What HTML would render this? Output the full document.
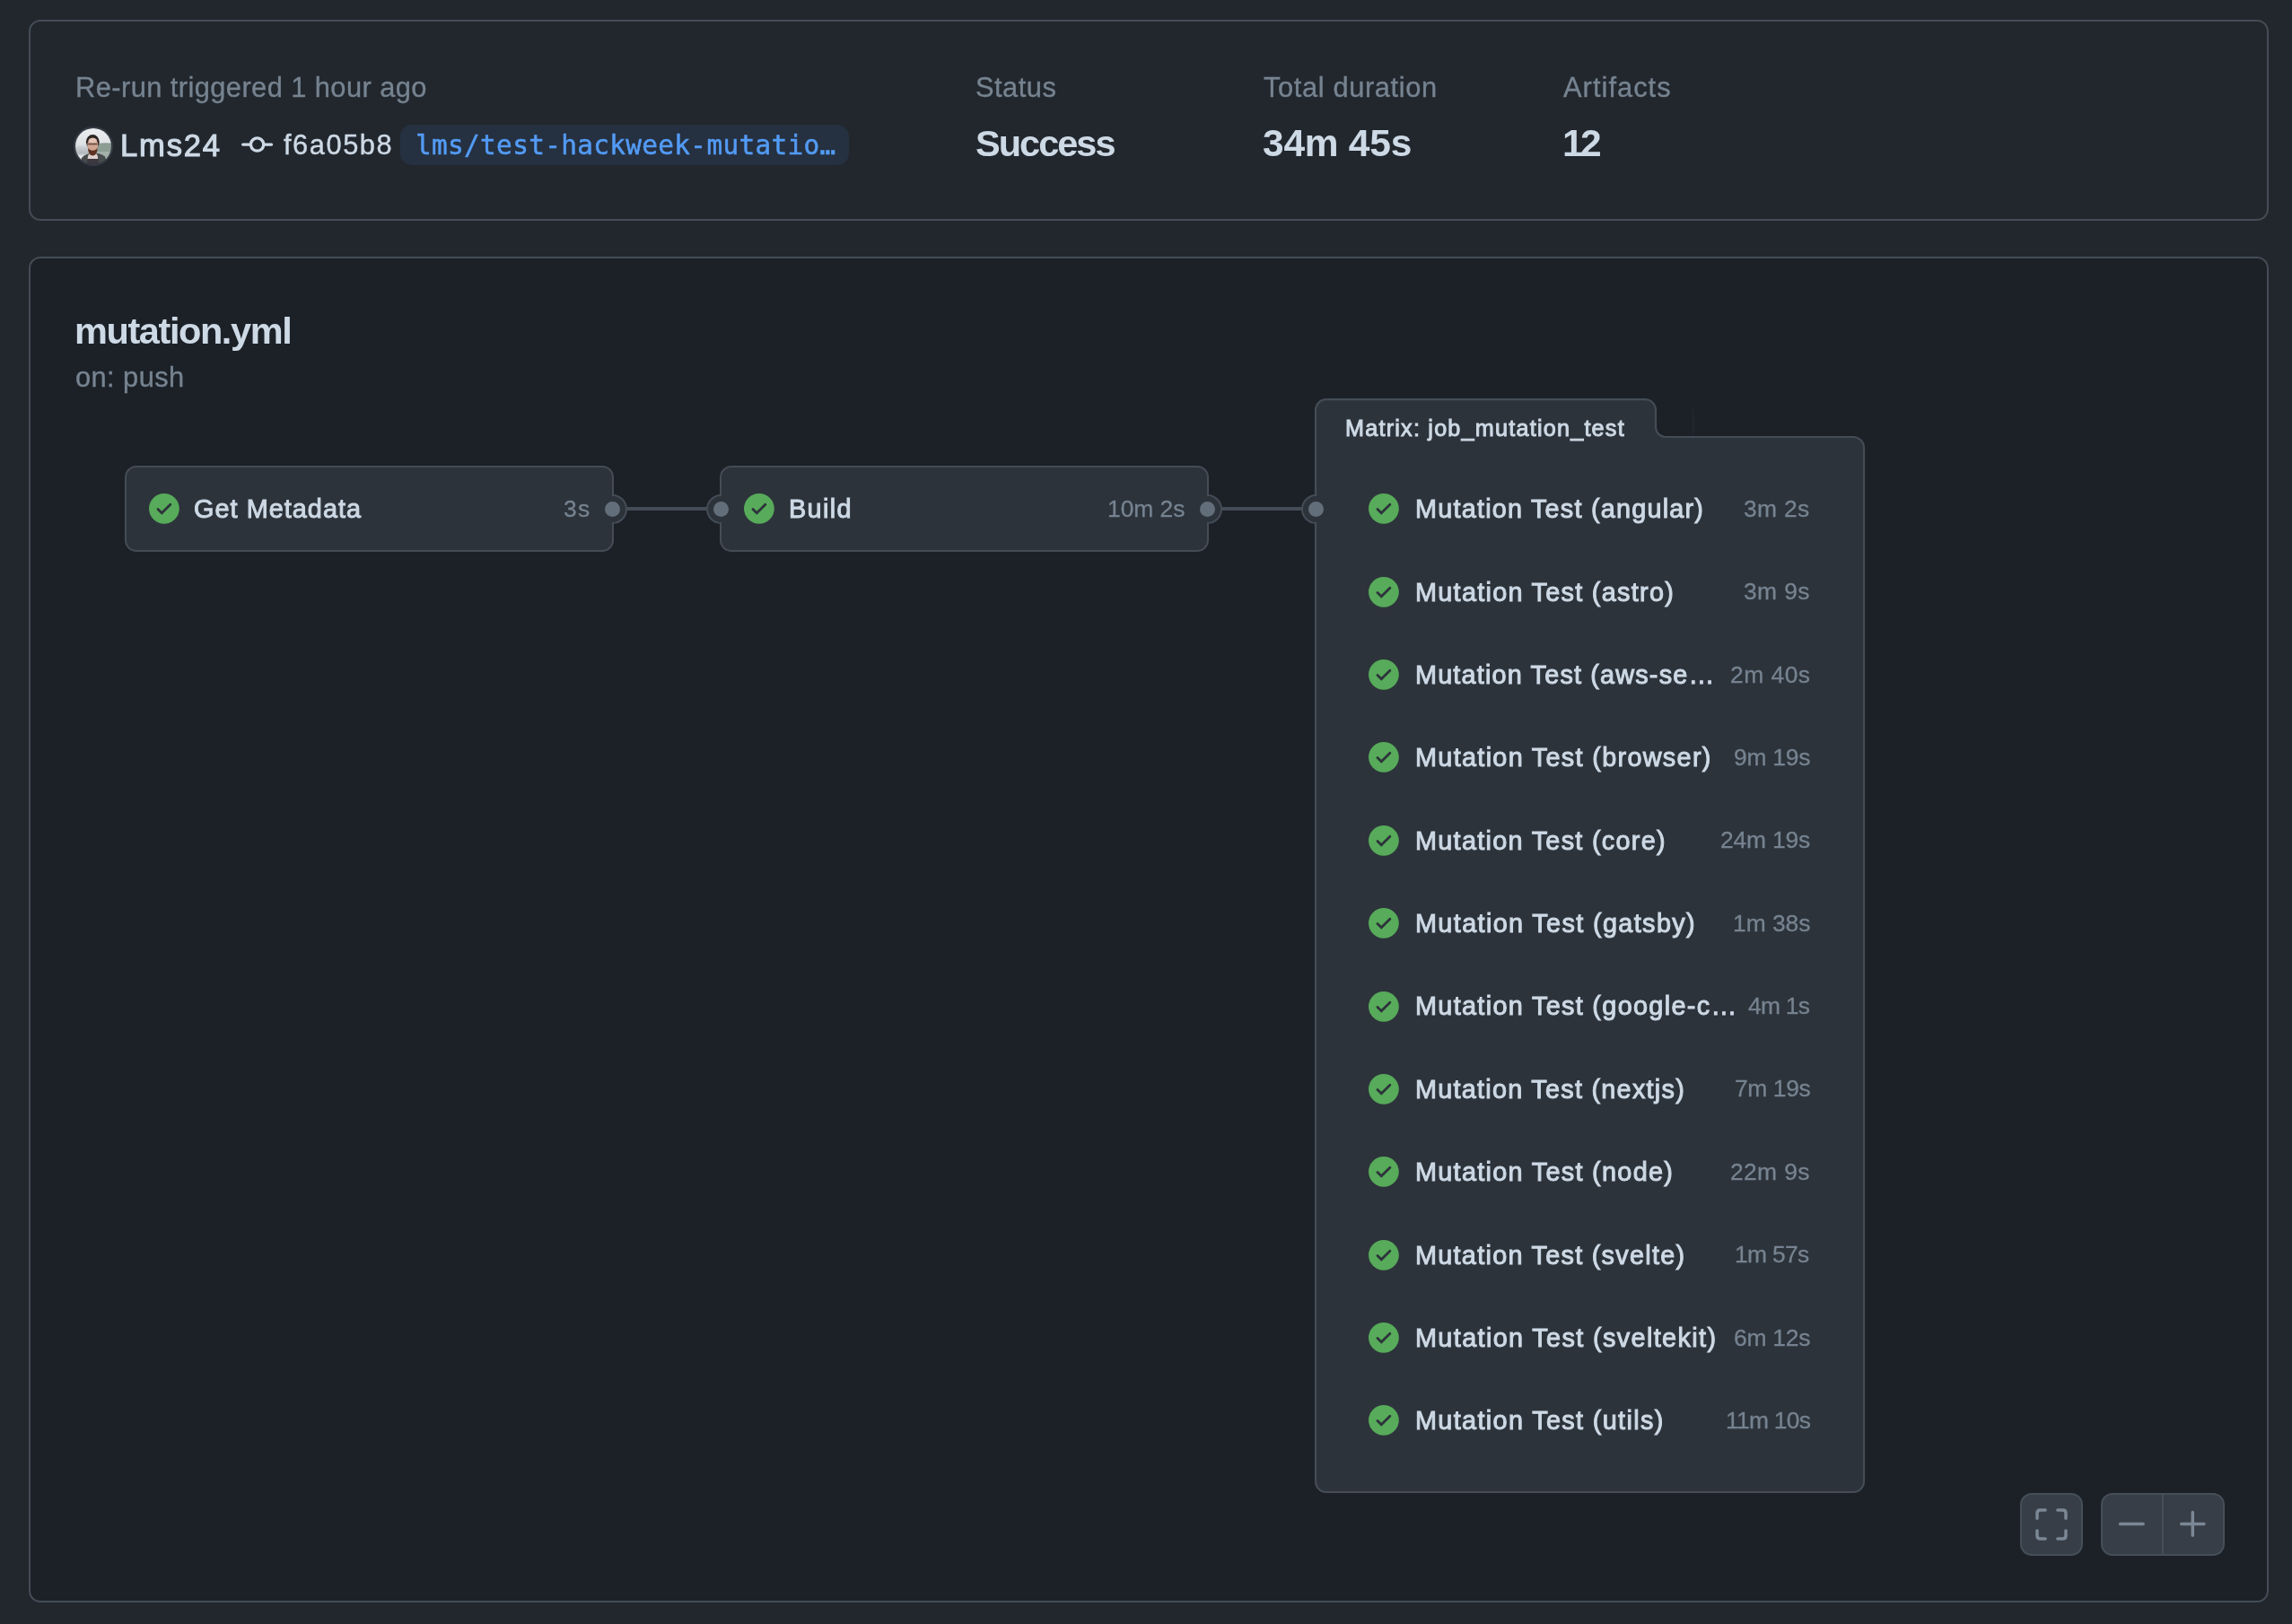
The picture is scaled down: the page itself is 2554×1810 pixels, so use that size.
<!DOCTYPE html>
<html lang="en"><head><meta charset="utf-8"><title>mutation.yml · workflow run</title>
<style>
html,body{margin:0;padding:0;background:#22272e;}
body{width:2554px;height:1810px;position:relative;overflow:hidden;font-family:'Liberation Sans', sans-serif;}
.t{position:absolute;white-space:nowrap;display:block;will-change:transform;}
.card{position:absolute;box-sizing:border-box;border:2px solid #444c56;border-radius:13px;}
.job{position:absolute;box-sizing:border-box;border:2px solid #444c56;border-radius:13px;background:#2d333b;}
.ck{position:absolute;display:block;}
.halo{position:absolute;box-sizing:border-box;width:33px;height:33px;border-radius:50%;border:2px solid #444c56;background:#2d333b;}
.dot{position:absolute;width:17px;height:17px;border-radius:50%;background:#636e7b;}
.line{position:absolute;height:4.4px;background:#444c56;}
.btn{position:absolute;box-sizing:border-box;background:#373e47;border:2px solid #464e57;border-radius:13px;}
svg{overflow:visible}

</style></head><body>
<div class="card" style="left:32px;top:22px;width:2496px;height:224px;"></div>
<span id="t1" class="t" style="left:84.00px;top:82.93px;font:400 30.8px/1 'Liberation Sans', sans-serif;color:#768390;letter-spacing:0.438px;-webkit-text-stroke:0.35px #768390;">Re-run triggered 1 hour ago</span>
<svg class="ck" style="left:82px;top:141px" width="44" height="44" viewBox="-2 -2 44 44">
<defs><clipPath id="av"><circle cx="20" cy="20" r="20"/></clipPath>
<filter id="bl" x="-10%" y="-10%" width="120%" height="120%"><feGaussianBlur stdDeviation="0.75"/></filter>
<linearGradient id="sky" x1="0" y1="0" x2="0" y2="1"><stop offset="0" stop-color="#eef0f3"/><stop offset=".45" stop-color="#dfe2e5"/><stop offset=".55" stop-color="#c3c9cd"/><stop offset=".66" stop-color="#b3babf"/><stop offset=".74" stop-color="#e2e5e8"/><stop offset="1" stop-color="#e9ebee"/></linearGradient></defs>
<circle cx="20" cy="20" r="21" fill="none" stroke="#353c45" stroke-width="2"/>
<g clip-path="url(#av)"><g filter="url(#bl)">
<rect x="-4" y="-4" width="48" height="48" fill="url(#sky)"/>
<path d="M24 17.5 Q32 15.5 44 17 V33 H24Z" fill="#8c9d94"/>
<path d="M24 26 H44 V33 H24Z" fill="#a3b0aa"/>
<path d="M3 44 L7 33 Q12 27.5 20 27.5 Q28 27.5 33 31.5 L38 44Z" fill="#474c4c"/>
<path d="M13.8 35 Q13.2 27 19.5 27 Q25.6 27 25 35 Z" fill="#ddd1cc"/>
<path d="M12.5 44 L13.5 34 H25.2 L27 44Z" fill="#3a3840"/>
<ellipse cx="19.3" cy="15.2" rx="7.4" ry="8.2" fill="#2b2421"/>
<ellipse cx="19.3" cy="18.6" rx="5.9" ry="8" fill="#cfa592"/>
<ellipse cx="19.3" cy="13.6" rx="4.6" ry="2.6" fill="#e3c4b6"/>
<path d="M14 22 Q14.4 30.6 19.3 30.6 Q24.2 30.6 24.6 22 Q22 25.2 19.3 24.8 Q16.6 25.2 14 22Z" fill="#5c3323"/>
<rect x="14.2" y="16.7" width="10.2" height="1.7" fill="#6a4d42"/>
</g></g></svg>
<span id="t2" class="t" style="left:134.10px;top:144.71px;font:400 34.6px/1 'Liberation Sans', sans-serif;color:#cdd9e5;letter-spacing:1.805px;-webkit-text-stroke:1.1px #cdd9e5;">Lms24</span>
<svg class="ck" style="left:269px;top:143.9px" width="35.2" height="35.2" viewBox="0 0 16 16"><path fill="#cdd9e5" d="M11.93 8.5a4.002 4.002 0 0 1-7.86 0H.75a.75.75 0 0 1 0-1.5h3.32a4.002 4.002 0 0 1 7.86 0h3.32a.75.75 0 0 1 0 1.5Zm-1.43-.75a2.5 2.5 0 1 0-5 0 2.5 2.5 0 0 0 5 0Z"/></svg>
<span id="t3" class="t" style="left:315.60px;top:146.93px;font:400 30.8px/1 'Liberation Sans', sans-serif;color:#cdd9e5;letter-spacing:1.552px;-webkit-text-stroke:0.4px #cdd9e5;">f6a05b8</span>
<div style="position:absolute;left:445.5px;top:138.6px;width:500.5px;height:45.4px;border-radius:13px;background:#253040;"></div>
<span id="t4" class="t" style="left:462.70px;top:148.33px;font:400 29.4px/1 'DejaVu Sans Mono', 'Liberation Mono', monospace;color:#539bf5;letter-spacing:0.327px;-webkit-text-stroke:0.5px #539bf5;">lms/test-hackweek-mutatio…</span>
<span id="t5" class="t" style="left:1086.70px;top:82.83px;font:400 30.8px/1 'Liberation Sans', sans-serif;color:#768390;letter-spacing:0.494px;-webkit-text-stroke:0.35px #768390;">Status</span>
<span id="t6" class="t" style="left:1086.70px;top:139.07px;font:700 41.5px/1 'Liberation Sans', sans-serif;color:#cdd9e5;letter-spacing:-1.995px;">Success</span>
<span id="t7" class="t" style="left:1407.70px;top:82.83px;font:400 30.8px/1 'Liberation Sans', sans-serif;color:#768390;letter-spacing:0.628px;-webkit-text-stroke:0.35px #768390;">Total duration</span>
<span id="t8" class="t" style="left:1406.70px;top:139.22px;font:700 42.5px/1 'Liberation Sans', sans-serif;color:#cdd9e5;letter-spacing:-0.253px;">34m 45s</span>
<span id="t9" class="t" style="left:1742.30px;top:82.83px;font:400 30.8px/1 'Liberation Sans', sans-serif;color:#768390;letter-spacing:1.045px;-webkit-text-stroke:0.35px #768390;">Artifacts</span>
<span id="t10" class="t" style="left:1740.80px;top:139.22px;font:700 42.5px/1 'Liberation Sans', sans-serif;color:#cdd9e5;letter-spacing:-3.610px;">12</span>
<div class="card" style="left:32px;top:286px;width:2496px;height:1500px;background:#1c2128;"></div>
<span id="t11" class="t" style="left:82.90px;top:348.37px;font:700 41.5px/1 'Liberation Sans', sans-serif;color:#cdd9e5;letter-spacing:-1.416px;">mutation.yml</span>
<span id="t12" class="t" style="left:83.90px;top:406.33px;font:400 30.8px/1 'Liberation Sans', sans-serif;color:#768390;letter-spacing:0.434px;-webkit-text-stroke:0.35px #768390;">on: push</span>
<div class="line" style="left:690px;top:565.0px;width:106px;"></div>
<div class="line" style="left:1353px;top:565.0px;width:106px;"></div>
<div class="job" style="left:139px;top:519.4px;width:545px;height:95.8px;"></div>
<svg class="ck" style="left:165.80px;top:550.30px" width="33.8" height="33.8" viewBox="0 0 16 16"><circle cx="8" cy="8" r="8" fill="#57ab5a"/><path d="M4.72 8.3 L6.75 10.3 L11.3 5.75" fill="none" stroke="#2d333b" stroke-width="1.32" stroke-linecap="round" stroke-linejoin="miter"/></svg>
<span id="t13" class="t" style="left:216.30px;top:552.62px;font:400 28.8px/1 'Liberation Sans', sans-serif;color:#cdd9e5;letter-spacing:1.054px;-webkit-text-stroke:1.0px #cdd9e5;">Get Metadata</span>
<span id="t14" class="t" style="right:1895.00px;top:553.65px;font:400 26.4px/1 'Liberation Sans', sans-serif;color:#768390;letter-spacing:1.330px;-webkit-text-stroke:0.3px #768390;">3s</span>
<div class="job" style="left:802px;top:519.4px;width:545px;height:95.8px;"></div>
<svg class="ck" style="left:828.80px;top:550.30px" width="33.8" height="33.8" viewBox="0 0 16 16"><circle cx="8" cy="8" r="8" fill="#57ab5a"/><path d="M4.72 8.3 L6.75 10.3 L11.3 5.75" fill="none" stroke="#2d333b" stroke-width="1.32" stroke-linecap="round" stroke-linejoin="miter"/></svg>
<span id="t15" class="t" style="left:879.30px;top:552.62px;font:400 28.8px/1 'Liberation Sans', sans-serif;color:#cdd9e5;letter-spacing:1.377px;-webkit-text-stroke:1.0px #cdd9e5;">Build</span>
<span id="t16" class="t" style="right:1234.00px;top:553.65px;font:400 26.4px/1 'Liberation Sans', sans-serif;color:#768390;letter-spacing:-0.038px;-webkit-text-stroke:0.3px #768390;">10m 2s</span>
<svg class="ck" style="left:0;top:0" width="2554" height="1810" viewBox="0 0 2554 1810">
<path d="M1466 458 A12 12 0 0 1 1478 445.2 H1833 A12 12 0 0 1 1845 457.2 V476 A11 11 0 0 0 1856 487 H2065 A12 12 0 0 1 2077 499 V1651 A12 12 0 0 1 2065 1663 H1478 A12 12 0 0 1 1466 1651 Z" fill="#2d333b" stroke="#444c56" stroke-width="2.2"/>
<path d="M1886.8 456 V484.5" stroke="#262b33" stroke-width="1.2" fill="none"/>
</svg>
<div class="halo" style="left:666.4px;top:550.7px;clip-path:inset(0 0 0 15.5px);"></div>
<div style="position:absolute;left:679.9px;top:552.6px;width:6px;height:29.2px;background:#2d333b;"></div>
<div class="dot" style="left:674.4px;top:558.7px;"></div>
<div class="halo" style="left:786.6px;top:550.7px;clip-path:inset(0 15.5px 0 0);"></div>
<div style="position:absolute;left:800.1px;top:552.6px;width:6px;height:29.2px;background:#2d333b;"></div>
<div class="dot" style="left:794.6px;top:558.7px;"></div>
<div class="halo" style="left:1329.4px;top:550.7px;clip-path:inset(0 0 0 15.5px);"></div>
<div style="position:absolute;left:1342.9px;top:552.6px;width:6px;height:29.2px;background:#2d333b;"></div>
<div class="dot" style="left:1337.4px;top:558.7px;"></div>
<div class="halo" style="left:1449.7px;top:550.7px;clip-path:inset(0 15.5px 0 0);"></div>
<div style="position:absolute;left:1463.2px;top:552.6px;width:6px;height:29.2px;background:#2d333b;"></div>
<div class="dot" style="left:1457.7px;top:558.7px;"></div>
<span id="t17" class="t" style="left:1498.80px;top:464.57px;font:400 25.2px/1 'Liberation Sans', sans-serif;color:#cdd9e5;letter-spacing:1.219px;-webkit-text-stroke:0.95px #cdd9e5;">Matrix: job_mutation_test</span>
<svg class="ck" style="left:1525.30px;top:550.30px" width="33.8" height="33.8" viewBox="0 0 16 16"><circle cx="8" cy="8" r="8" fill="#57ab5a"/><path d="M4.72 8.3 L6.75 10.3 L11.3 5.75" fill="none" stroke="#2d333b" stroke-width="1.32" stroke-linecap="round" stroke-linejoin="miter"/></svg>
<span id="r0" class="t" style="left:1576.50px;top:552.82px;font:400 28.8px/1 'Liberation Sans', sans-serif;color:#cdd9e5;letter-spacing:1.226px;-webkit-text-stroke:1.0px #cdd9e5;">Mutation Test (angular)</span>
<span id="d0" class="t" style="right:537.10px;top:553.55px;font:400 26.4px/1 'Liberation Sans', sans-serif;color:#768390;letter-spacing:0.333px;-webkit-text-stroke:0.3px #768390;">3m 2s</span>
<svg class="ck" style="left:1525.30px;top:642.67px" width="33.8" height="33.8" viewBox="0 0 16 16"><circle cx="8" cy="8" r="8" fill="#57ab5a"/><path d="M4.72 8.3 L6.75 10.3 L11.3 5.75" fill="none" stroke="#2d333b" stroke-width="1.32" stroke-linecap="round" stroke-linejoin="miter"/></svg>
<span id="r1" class="t" style="left:1576.50px;top:646.19px;font:400 28.8px/1 'Liberation Sans', sans-serif;color:#cdd9e5;letter-spacing:1.292px;-webkit-text-stroke:1.0px #cdd9e5;">Mutation Test (astro)</span>
<span id="d1" class="t" style="right:537.10px;top:645.92px;font:400 26.4px/1 'Liberation Sans', sans-serif;color:#768390;letter-spacing:0.380px;-webkit-text-stroke:0.3px #768390;">3m 9s</span>
<svg class="ck" style="left:1525.30px;top:735.04px" width="33.8" height="33.8" viewBox="0 0 16 16"><circle cx="8" cy="8" r="8" fill="#57ab5a"/><path d="M4.72 8.3 L6.75 10.3 L11.3 5.75" fill="none" stroke="#2d333b" stroke-width="1.32" stroke-linecap="round" stroke-linejoin="miter"/></svg>
<span id="r2" class="t" style="left:1576.50px;top:737.56px;font:400 28.8px/1 'Liberation Sans', sans-serif;color:#cdd9e5;letter-spacing:1.185px;-webkit-text-stroke:1.0px #cdd9e5;">Mutation Test (aws-se…</span>
<span id="d2" class="t" style="right:536.10px;top:739.29px;font:400 26.4px/1 'Liberation Sans', sans-serif;color:#768390;letter-spacing:0.494px;-webkit-text-stroke:0.3px #768390;">2m 40s</span>
<svg class="ck" style="left:1525.30px;top:827.41px" width="33.8" height="33.8" viewBox="0 0 16 16"><circle cx="8" cy="8" r="8" fill="#57ab5a"/><path d="M4.72 8.3 L6.75 10.3 L11.3 5.75" fill="none" stroke="#2d333b" stroke-width="1.32" stroke-linecap="round" stroke-linejoin="miter"/></svg>
<span id="r3" class="t" style="left:1576.50px;top:829.93px;font:400 28.8px/1 'Liberation Sans', sans-serif;color:#cdd9e5;letter-spacing:1.321px;-webkit-text-stroke:1.0px #cdd9e5;">Mutation Test (browser)</span>
<span id="d3" class="t" style="right:537.10px;top:830.66px;font:400 26.4px/1 'Liberation Sans', sans-serif;color:#768390;letter-spacing:-0.228px;-webkit-text-stroke:0.3px #768390;">9m 19s</span>
<svg class="ck" style="left:1525.30px;top:919.78px" width="33.8" height="33.8" viewBox="0 0 16 16"><circle cx="8" cy="8" r="8" fill="#57ab5a"/><path d="M4.72 8.3 L6.75 10.3 L11.3 5.75" fill="none" stroke="#2d333b" stroke-width="1.32" stroke-linecap="round" stroke-linejoin="miter"/></svg>
<span id="r4" class="t" style="left:1576.50px;top:923.30px;font:400 28.8px/1 'Liberation Sans', sans-serif;color:#cdd9e5;letter-spacing:1.300px;-webkit-text-stroke:1.0px #cdd9e5;">Mutation Test (core)</span>
<span id="d4" class="t" style="right:537.10px;top:923.03px;font:400 26.4px/1 'Liberation Sans', sans-serif;color:#768390;letter-spacing:-0.158px;-webkit-text-stroke:0.3px #768390;">24m 19s</span>
<svg class="ck" style="left:1525.30px;top:1012.15px" width="33.8" height="33.8" viewBox="0 0 16 16"><circle cx="8" cy="8" r="8" fill="#57ab5a"/><path d="M4.72 8.3 L6.75 10.3 L11.3 5.75" fill="none" stroke="#2d333b" stroke-width="1.32" stroke-linecap="round" stroke-linejoin="miter"/></svg>
<span id="r5" class="t" style="left:1576.50px;top:1014.67px;font:400 28.8px/1 'Liberation Sans', sans-serif;color:#cdd9e5;letter-spacing:1.375px;-webkit-text-stroke:1.0px #cdd9e5;">Mutation Test (gatsby)</span>
<span id="d5" class="t" style="right:537.10px;top:1016.40px;font:400 26.4px/1 'Liberation Sans', sans-serif;color:#768390;letter-spacing:-0.038px;-webkit-text-stroke:0.3px #768390;">1m 38s</span>
<svg class="ck" style="left:1525.30px;top:1104.52px" width="33.8" height="33.8" viewBox="0 0 16 16"><circle cx="8" cy="8" r="8" fill="#57ab5a"/><path d="M4.72 8.3 L6.75 10.3 L11.3 5.75" fill="none" stroke="#2d333b" stroke-width="1.32" stroke-linecap="round" stroke-linejoin="miter"/></svg>
<span id="r6" class="t" style="left:1576.50px;top:1107.04px;font:400 28.8px/1 'Liberation Sans', sans-serif;color:#cdd9e5;letter-spacing:1.330px;-webkit-text-stroke:1.0px #cdd9e5;">Mutation Test (google-c…</span>
<span id="d6" class="t" style="right:538.10px;top:1107.77px;font:400 26.4px/1 'Liberation Sans', sans-serif;color:#768390;letter-spacing:-0.760px;-webkit-text-stroke:0.3px #768390;">4m 1s</span>
<svg class="ck" style="left:1525.30px;top:1196.89px" width="33.8" height="33.8" viewBox="0 0 16 16"><circle cx="8" cy="8" r="8" fill="#57ab5a"/><path d="M4.72 8.3 L6.75 10.3 L11.3 5.75" fill="none" stroke="#2d333b" stroke-width="1.32" stroke-linecap="round" stroke-linejoin="miter"/></svg>
<span id="r7" class="t" style="left:1576.50px;top:1200.41px;font:400 28.8px/1 'Liberation Sans', sans-serif;color:#cdd9e5;letter-spacing:1.267px;-webkit-text-stroke:1.0px #cdd9e5;">Mutation Test (nextjs)</span>
<span id="d7" class="t" style="right:537.10px;top:1200.14px;font:400 26.4px/1 'Liberation Sans', sans-serif;color:#768390;letter-spacing:-0.380px;-webkit-text-stroke:0.3px #768390;">7m 19s</span>
<svg class="ck" style="left:1525.30px;top:1289.26px" width="33.8" height="33.8" viewBox="0 0 16 16"><circle cx="8" cy="8" r="8" fill="#57ab5a"/><path d="M4.72 8.3 L6.75 10.3 L11.3 5.75" fill="none" stroke="#2d333b" stroke-width="1.32" stroke-linecap="round" stroke-linejoin="miter"/></svg>
<span id="r8" class="t" style="left:1576.50px;top:1291.78px;font:400 28.8px/1 'Liberation Sans', sans-serif;color:#cdd9e5;letter-spacing:1.310px;-webkit-text-stroke:1.0px #cdd9e5;">Mutation Test (node)</span>
<span id="d8" class="t" style="right:537.10px;top:1292.51px;font:400 26.4px/1 'Liberation Sans', sans-serif;color:#768390;letter-spacing:0.380px;-webkit-text-stroke:0.3px #768390;">22m 9s</span>
<svg class="ck" style="left:1525.30px;top:1381.63px" width="33.8" height="33.8" viewBox="0 0 16 16"><circle cx="8" cy="8" r="8" fill="#57ab5a"/><path d="M4.72 8.3 L6.75 10.3 L11.3 5.75" fill="none" stroke="#2d333b" stroke-width="1.32" stroke-linecap="round" stroke-linejoin="miter"/></svg>
<span id="r9" class="t" style="left:1576.50px;top:1385.15px;font:400 28.8px/1 'Liberation Sans', sans-serif;color:#cdd9e5;letter-spacing:1.285px;-webkit-text-stroke:1.0px #cdd9e5;">Mutation Test (svelte)</span>
<span id="d9" class="t" style="right:538.10px;top:1384.88px;font:400 26.4px/1 'Liberation Sans', sans-serif;color:#768390;letter-spacing:-0.646px;-webkit-text-stroke:0.3px #768390;">1m 57s</span>
<svg class="ck" style="left:1525.30px;top:1474.00px" width="33.8" height="33.8" viewBox="0 0 16 16"><circle cx="8" cy="8" r="8" fill="#57ab5a"/><path d="M4.72 8.3 L6.75 10.3 L11.3 5.75" fill="none" stroke="#2d333b" stroke-width="1.32" stroke-linecap="round" stroke-linejoin="miter"/></svg>
<span id="r10" class="t" style="left:1576.50px;top:1476.52px;font:400 28.8px/1 'Liberation Sans', sans-serif;color:#cdd9e5;letter-spacing:1.378px;-webkit-text-stroke:1.0px #cdd9e5;">Mutation Test (sveltekit)</span>
<span id="d10" class="t" style="right:537.10px;top:1478.25px;font:400 26.4px/1 'Liberation Sans', sans-serif;color:#768390;letter-spacing:-0.228px;-webkit-text-stroke:0.3px #768390;">6m 12s</span>
<svg class="ck" style="left:1525.30px;top:1566.37px" width="33.8" height="33.8" viewBox="0 0 16 16"><circle cx="8" cy="8" r="8" fill="#57ab5a"/><path d="M4.72 8.3 L6.75 10.3 L11.3 5.75" fill="none" stroke="#2d333b" stroke-width="1.32" stroke-linecap="round" stroke-linejoin="miter"/></svg>
<span id="r11" class="t" style="left:1576.50px;top:1568.89px;font:400 28.8px/1 'Liberation Sans', sans-serif;color:#cdd9e5;letter-spacing:1.358px;-webkit-text-stroke:1.0px #cdd9e5;">Mutation Test (utils)</span>
<span id="d11" class="t" style="right:537.10px;top:1569.62px;font:400 26.4px/1 'Liberation Sans', sans-serif;color:#768390;letter-spacing:-0.728px;-webkit-text-stroke:0.3px #768390;">11m 10s</span>
<div class="btn" style="left:2251px;top:1663.8px;width:70px;height:70.4px;"></div>
<div class="btn" style="left:2341px;top:1663.8px;width:138.2px;height:70.4px;"></div>
<div style="position:absolute;left:2409px;top:1665.8px;width:2.2px;height:66.4px;background:#464e57;"></div>
<svg class="ck" style="left:0;top:0" width="2554" height="1810" viewBox="0 0 2554 1810" fill="none" stroke="#7b8794" stroke-width="3.5" stroke-linecap="round" stroke-linejoin="round">
<path d="M2270 1692.2 V1686.6 Q2270 1683.1 2273.5 1683.1 H2279.1"/>
<path d="M2292.9 1683.1 H2298.5 Q2302 1683.1 2302 1686.6 V1692.2"/>
<path d="M2302 1706 V1711.6 Q2302 1715.1 2298.5 1715.1 H2292.9"/>
<path d="M2279.1 1715.1 H2273.5 Q2270 1715.1 2270 1711.6 V1706"/>
<path d="M2362.6 1698.5 H2388.2"/>
<path d="M2430.7 1698.5 H2456 M2443.3 1685.6 V1711.3"/>
</svg>
</body></html>
